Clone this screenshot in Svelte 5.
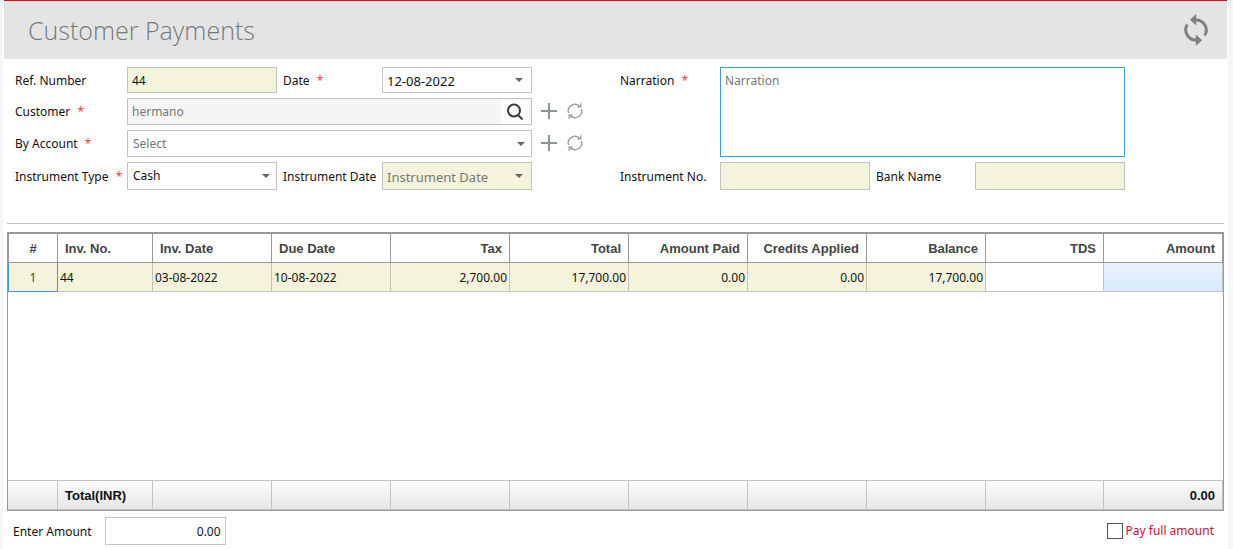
<script lang="ts">
	type Invoice = {
		no: string;
		date: string;
		due: string;
		tax: string;
		total: string;
		paid: string;
		credits: string;
		balance: string;
		tds: string;
		amount: string;
	};

	const invoices: Invoice[] = [
		{
			no: '44',
			date: '03-08-2022',
			due: '10-08-2022',
			tax: '2,700.00',
			total: '17,700.00',
			paid: '0.00',
			credits: '0.00',
			balance: '17,700.00',
			tds: '',
			amount: ''
		}
	];

	const columns: { key: keyof Invoice; label: string; text?: boolean }[] = [
		{ key: 'no', label: 'Inv. No.', text: true },
		{ key: 'date', label: 'Inv. Date', text: true },
		{ key: 'due', label: 'Due Date', text: true },
		{ key: 'tax', label: 'Tax' },
		{ key: 'total', label: 'Total' },
		{ key: 'paid', label: 'Amount Paid' },
		{ key: 'credits', label: 'Credits Applied' },
		{ key: 'balance', label: 'Balance' },
		{ key: 'tds', label: 'TDS' },
		{ key: 'amount', label: 'Amount' }
	];

	const footer: Record<string, string> = { no: 'Total(INR)', amount: '0.00' };

	let refNumber = $state('44');
	let date = $state('12-08-2022');
	let customer = $state('hermano');
	let account = $state('');
	let instrumentType = $state('Cash');
	let instrumentDate = $state('');
	let narration = $state('');
	let amount = $state('0.00');
	let payFull = $state(false);
</script>

{#snippet caret()}
	<svg class="caret" viewBox="0 0 8 4" aria-hidden="true"><path d="M0 0h8L4 4z" /></svg>
{/snippet}

{#snippet rowActions(name: string)}
	<div class="actions">
		<button type="button" aria-label="Add {name}">
			<svg width="16" height="16" viewBox="0 0 16 16" aria-hidden="true">
				<path d="M8 0v16M0 8h16" fill="none" stroke="#8f9499" stroke-width="2" />
			</svg>
		</button>
		<button type="button" aria-label="Reload {name}">
			<svg width="16" height="16" viewBox="0 0 16 16" aria-hidden="true">
				<g fill="none" stroke="#8f9499" stroke-width="1.2">
					<path d="M1.500 10A6.800 6.800 0 0 1 13 3.500" />
					<path d="M14.500 6A6.800 6.800 0 0 1 3 12.500" />
					<path d="M13.800 .3v3.600h-3.400M2.200 15.700v-3.600h3.400" />
				</g>
			</svg>
		</button>
	</div>
{/snippet}

<main class="page">
	<header>
		<h1>Customer Payments</h1>
		<button type="button" aria-label="Refresh">
			<svg width="24" height="32" viewBox="0 0 24 32" aria-hidden="true">
				<g fill="none" stroke="#7f7f7f" stroke-width="3">
					<path d="M3.300 10.500A10.200 10.200 0 0 0 13 26" />
					<path d="M20.700 21.500A10.200 10.200 0 0 0 11 6" />
				</g>
				<path d="M12.200 0v11.500L6 5.700zM11.800 20.500V32L18 26.300z" fill="#7f7f7f" />
			</svg>
		</button>
	</header>

	<form class="form" onsubmit={(e) => e.preventDefault()}>
		<div class="fields left">
			<label for="ref">Ref. Number</label>
			<div class="box beige"><input id="ref" bind:value={refNumber} /></div>
			<label for="date">Date <i>*</i></label>
			<div class="box date">
				<input id="date" bind:value={date} />
				<button type="button" class="drop" aria-label="Pick date">{@render caret()}</button>
			</div>

			<label class="first" for="customer">Customer <i>*</i></label>
			<div class="box wide grey">
				<input id="customer" bind:value={customer} />
				<button type="button" class="search" aria-label="Search customer">
					<svg width="18" height="18" viewBox="0 0 18 18" aria-hidden="true">
						<g fill="none" stroke="#3c3c3c" stroke-width="2">
							<circle cx="8" cy="7.500" r="6" />
							<path d="M12 12l4.500 4.500" />
						</g>
					</svg>
				</button>
			</div>
			{@render rowActions('customer')}

			<label class="first" for="account">By Account <i>*</i></label>
			<div class="box wide pick">
				<select id="account" class="muted" bind:value={account}>
					<option value="">Select</option>
				</select>
				{@render caret()}
			</div>
			{@render rowActions('account')}

			<label class="first" for="type">Instrument Type <i>*</i></label>
			<div class="box pick">
				<select id="type" bind:value={instrumentType}>
					<option>Cash</option>
				</select>
				{@render caret()}
			</div>
			<label for="idate">Instrument Date</label>
			<div class="box date beige">
				<input id="idate" placeholder="Instrument Date" bind:value={instrumentDate} />
				<button type="button" class="drop" aria-label="Pick instrument date">{@render caret()}</button>
			</div>
		</div>

		<div class="fields right">
			<label for="narration">Narration <i>*</i></label>
			<textarea id="narration" placeholder="Narration" bind:value={narration}></textarea>
			<label class="first" for="ino">Instrument No.</label>
			<div class="box beige"><input id="ino" /></div>
			<label for="bank">Bank Name</label>
			<div class="box beige"><input id="bank" /></div>
		</div>
	</form>

	<hr />

	<div class="grid">
		<table>
			<colgroup>
				<col class="c-num" />
				{#each columns as col}
					<col class="c-{col.key}" />
				{/each}
			</colgroup>
			<thead>
				<tr>
					<th class="num">#</th>
					{#each columns as col}
						<th class:text={col.text}>{col.label}</th>
					{/each}
				</tr>
			</thead>
			<tbody>
				{#each invoices as inv, i}
					<tr>
						<td class="num current">{i + 1}</td>
						{#each columns as col}
							<td class={col.key} class:text={col.text}>{inv[col.key]}</td>
						{/each}
					</tr>
				{/each}
				<tr class="filler"><td colspan="11"></td></tr>
			</tbody>
			<tfoot>
				<tr>
					<td></td>
					{#each columns as col}
						<td class:text={col.text}>{footer[col.key] ?? ''}</td>
					{/each}
				</tr>
			</tfoot>
		</table>
	</div>

	<div class="bottom">
		<label for="amount">Enter Amount</label>
		<div class="box amount-box"><input id="amount" bind:value={amount} /></div>
		<label class="full"><input type="checkbox" bind:checked={payFull} />Pay full amount</label>
	</div>
</main>

<style>
	:global(body) {
		background: #f4f6f9;
	}

	.page {
		box-sizing: border-box;
		margin: 0 5px 0 3px;
		background: #fff;
		padding: 0 1px;
		min-height: 100vh;
		color: #111;
		font-size: 12px;
		line-height: 18px;
		font-family: 'Noto Sans', 'Open Sans', sans-serif;
	}

	button,
	input,
	select,
	textarea {
		box-sizing: border-box;
		margin: 0;
		border: 0;
		border-radius: 0;
		background: none;
		padding: 0;
		color: inherit;
		font: inherit;
	}

	button {
		display: flex;
		justify-content: center;
		align-items: center;
		cursor: pointer;
	}

	header {
		display: flex;
		justify-content: space-between;
		align-items: center;
		box-sizing: border-box;
		border-top: 1px solid #cc1020;
		background: #e4e4e4;
		padding: 0 19px 0 24px;
		height: 59px;
	}

	h1 {
		margin: 0;
		color: #75797e;
		font-weight: 300;
		font-size: 25px;
		line-height: 36px;
		font-family: 'Open Sans', 'Noto Sans', sans-serif;
	}

	.form {
		display: grid;
		grid-template-columns: 1fr 1fr;
		padding: 8px 2px 0 11px;
	}

	.fields {
		display: grid;
		grid-template-rows: 26px 27px 27px 28px;
		row-gap: 5px;
		align-items: stretch;
	}

	.left {
		grid-template-columns: 112px 150px 105px 150px 1fr;
	}

	.right {
		grid-template-columns: 100px 150px 105px 150px;
	}

	label {
		align-self: center;
		padding-top: 1px;
		padding-left: 6px;
		white-space: nowrap;
	}

	.first,
	label:first-child {
		grid-column: 1;
		padding-left: 0;
	}

	i {
		margin-left: 4px;
		color: #f04040;
		font-style: normal;
	}

	.box {
		display: flex;
		box-sizing: border-box;
		border: 1px solid #c3c3c3;
		background: #fff;
		min-width: 0;
	}

	.box input {
		flex: 1;
		padding: 1px 4px 0;
		min-width: 0;
	}

	.box.date {
		font-size: 13px;
	}

	.box.beige {
		background: #f4f4dc;
	}

	.box.grey {
		background: #f5f5f5;
		color: #777;
	}

	.wide {
		grid-column: 2 / 5;
	}

	.drop {
		width: 24px;
	}

	.caret {
		width: 8px;
		height: 4px;
		fill: #666;
	}

	.search {
		margin: 1px 2px 0 0;
		background: #fff;
		width: 28px;
	}

	.pick {
		display: grid;
		align-items: center;
	}

	.pick select,
	.pick .caret {
		grid-area: 1 / 1;
	}

	.pick select {
		appearance: none;
		padding: 0 20px 0 5px;
		width: 100%;
		height: 100%;
	}

	.pick .caret {
		justify-self: end;
		margin-right: 6px;
		pointer-events: none;
	}

	.muted,
	::placeholder {
		opacity: 1;
		color: #777;
	}

	.actions {
		display: flex;
		align-items: center;
		gap: 10px;
		padding-bottom: 1px;
		padding-left: 9px;
	}

	textarea {
		grid-row: 1 / 4;
		grid-column: 2 / 5;
		outline: none;
		border: 1px solid #3a99f0;
		padding: 4px;
		resize: none;
	}

	.right label:first-child {
		grid-row: 1;
	}

	.right .first,
	.right .first ~ * {
		grid-row: 4;
	}

	hr {
		margin: 33px 3px 8px;
		border: 0;
		background: #c3c3c3;
		height: 1px;
	}

	.grid {
		margin: 0 3px;
		border: 1px solid #999;
	}

	table {
		border-spacing: 0;
		width: 100%;
		table-layout: fixed;
	}

	.c-num {
		width: 50px;
	}

	.c-no {
		width: 95px;
	}

	.c-tds {
		width: 118px;
	}

	th,
	td {
		box-sizing: border-box;
		border-right: 1px solid #c3c3c3;
		border-bottom: 1px solid #c3c3c3;
		padding: 2px 2px 0;
		height: 29px;
		overflow: hidden;
		text-align: right;
		white-space: nowrap;
	}

	th {
		border-top: 1px solid #999;
		border-right-color: #999;
		border-bottom-color: #999;
		padding: 2px 7px 0;
		height: 30px;
		color: #444;
		font-weight: 700;
		font-size: 13px;
		font-family: 'Liberation Sans', Arial, sans-serif;
	}

	.text {
		text-align: left;
	}

	.num {
		border-left: 1px solid #999;
		text-align: center;
	}

	tbody td {
		background: #f4f4dc;
	}

	tbody .current {
		border-color: #3a99f0;
		color: #444;
	}

	tbody .tds {
		background: #fff;
	}

	tbody .amount {
		background: linear-gradient(#e9f3fd, #d9eafb);
	}

	.filler td {
		border-right: 0;
		background: #fff;
		height: 189px;
	}

	tfoot td {
		background: linear-gradient(#fcfcfc, #e6e6e6);
		padding: 2px 7px 0;
		font-weight: 700;
		font-size: 13px;
		font-family: 'Liberation Sans', Arial, sans-serif;
	}

	.bottom {
		display: flex;
		align-items: center;
		padding: 6px 13px 4px 9px;
	}

	.bottom label:first-child {
		padding-top: 2px;
	}

	.amount-box {
		margin-left: 13px;
		width: 121px;
		height: 28px;
	}

	.amount-box input {
		text-align: right;
	}

	.full {
		display: flex;
		align-items: center;
		gap: 3px;
		margin-left: auto;
		padding-top: 0;
		color: #cc1030;
	}

	.full input {
		appearance: none;
		border: 1px solid #555;
		background: #fff;
		width: 16px;
		height: 16px;
	}

	.full input:checked {
		background: #cc1030;
		box-shadow: inset 0 0 0 3px #fff;
	}
</style>
